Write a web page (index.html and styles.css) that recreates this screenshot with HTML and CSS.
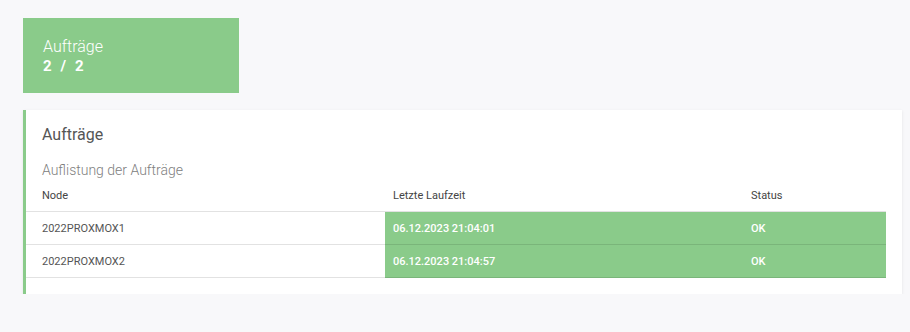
FILE: index.html
```html
<!DOCTYPE html>
<html lang="de">
<head>
    <meta charset="UTF-8">
    <meta name="viewport" content="width=device-width, initial-scale=1.0">
    <title>Aufträge</title>
    <link rel="stylesheet" href="styles.css">
</head>
<body>
    <div class="stat">
        <div class="stat-label">Aufträge</div>
        <div class="stat-value">2 / 2</div>
    </div>
    <div class="card">
        <div class="card-title">Aufträge</div>
        <div class="card-subtitle">Auflistung der Aufträge</div>
        <table class="jobs">
            <thead>
                <tr>
                    <th class="col-node">Node</th>
                    <th class="col-time">Letzte Laufzeit</th>
                    <th>Status</th>
                </tr>
            </thead>
            <tbody>
                <tr>
                    <td>2022PROXMOX1</td>
                    <td class="ok">06.12.2023 21:04:01</td>
                    <td class="ok">OK</td>
                </tr>
                <tr>
                    <td>2022PROXMOX2</td>
                    <td class="ok">06.12.2023 21:04:57</td>
                    <td class="ok">OK</td>
                </tr>
            </tbody>
        </table>
    </div>
</body>
</html>
```

FILE: styles.css
```css
body {
    font-family: Roboto, "Liberation Sans", sans-serif;
    margin: 0;
    padding: 18px 8px 0 23px;
    background: #f8f8fa;
    color: #555;
}
.stat {
    width: 216px;
    height: 75px;
    box-sizing: border-box;
    padding: 19px 20px;
    background: #8acb8a;
    color: white;
}
.stat-label {
    font-size: 16px;
    font-weight: 300;
    line-height: 19px;
}
.stat-value {
    font-size: 15px;
    font-weight: bold;
    line-height: 18px;
    letter-spacing: 2.6px;
    margin-top: 1px;
}
.card {
    margin-top: 17px;
    background: white;
    border-left: 3px solid #8acb8a;
    padding: 15px 16px 16px 0;
    box-shadow: 0 1px 3px rgba(0, 0, 0, 0.09);
}
.card-title {
    padding-left: 16px;
    font-size: 16px;
    line-height: 20px;
    color: #555;
}
.card-subtitle {
    padding-left: 16px;
    margin-top: 15px;
    font-size: 14px;
    font-weight: 300;
    line-height: 20px;
    color: #808080;
}
.jobs {
    width: 100%;
    border-collapse: collapse;
    table-layout: fixed;
    font-size: 11px;
    line-height: 13px;
}
.jobs th {
    text-align: left;
    font-weight: 400;
    color: #444;
    padding: 9px 8px;
    border-bottom: 1px solid #e2e2e2;
}
.jobs td {
    padding: 10px 8px 9px;
    border-bottom: 1px solid #e2e2e2;
    color: #555;
}
.jobs th:first-child, .jobs td:first-child {
    padding-left: 16px;
}
.col-node {
    width: 335px;
}
.col-time {
    width: 342px;
}
.jobs td.ok {
    background: #8acb8a;
    color: white;
    font-weight: 500;
    border-bottom-color: #7ab57a;
}
```
